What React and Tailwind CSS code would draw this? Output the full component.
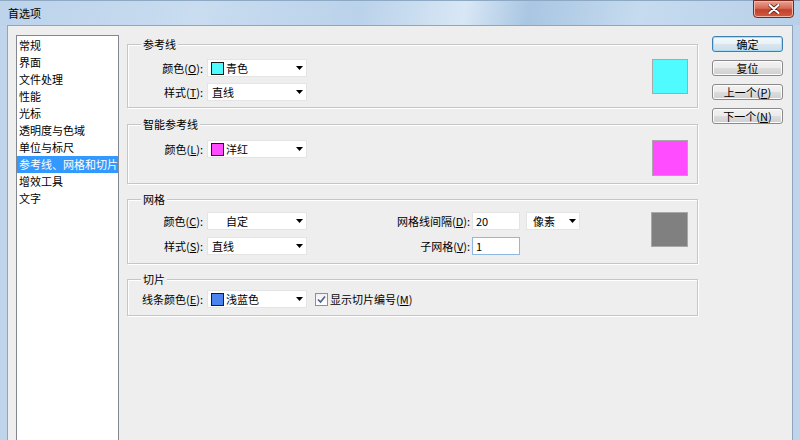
import React from "react";

const Arrow = () => (
  <svg width="7" height="4" viewBox="0 0 7 4" className="shrink-0">
    <polygon points="0,0 7,0 3.5,4" fill="#000" />
  </svg>
);

const Swatch = ({ color }) => (
  <span
    className="w-[13px] h-[13px] border border-[#1a1a1a] shrink-0"
    style={{ background: color || "transparent", borderColor: color ? "#1a1a1a" : "transparent" }}
  />
);

const Dropdown = ({ color, text, showSwatch = true, w = "w-[100px] ml-[2px]" }) => (
  <div className={`${w} h-[18px] bg-white border border-[#e4e4e4] flex items-center pl-[3px] pr-[3px] shrink-0`}>
    {showSwatch && <Swatch color={color} />}
    <span className={showSwatch ? "ml-[2px] flex-1" : "ml-[1px] flex-1"}>{text}</span>
    <Arrow />
  </div>
);

const Label = ({ children, w = "w-[77px]" }) => (
  <div className={`${w} text-right pr-[2px] shrink-0`}>{children}</div>
);

const Group = ({ title, className, children }) => (
  <div
    className={`border border-[#c6c6c6] shadow-[inset_1px_1px_0_#ffffff,1px_1px_0_#ffffff] flex flex-col ${className}`}
  >
    <div className="-mt-[9px] ml-[13px] px-[2px] bg-[#eeeeee] self-start leading-[16px]">{title}</div>
    {children}
  </div>
);

const BigSwatch = ({ color, className }) => (
  <div className={`border border-[#a8a8a8] ml-auto mr-[9px] shrink-0 ${className}`} style={{ background: color }} />
);

const Button = ({ children, primary }) => (
  <div
    className={`h-[16px] rounded-[3px] border flex items-center justify-center leading-none ${
      primary
        ? "border-[#3c7fb1] shadow-[inset_0_0_0_1px_#a6dcf5] bg-[linear-gradient(#f4f9fc,#e9f1f7_50%,#d9e6ef_50%,#cfdde8)]"
        : "border-[#8a8a8a] shadow-[inset_0_0_0_1px_#fcfcfc] bg-[linear-gradient(#f2f2f2,#ebebeb_50%,#dddddd_50%,#cfcfcf)]"
    }`}
  >
    {children}
  </div>
);

const items = ["常规", "界面", "文件处理", "性能", "光标", "透明度与色域", "单位与标尺", "参考线、网格和切片", "增效工具", "文字"];

export default function App() {
  return (
    <div className="w-[800px] h-[440px] overflow-hidden flex flex-col bg-[#bed5ec] text-[11px] text-black font-['Noto_Sans_CJK_SC',sans-serif]">
      {/* Title bar */}
      <div className="h-[25px] shrink-0 flex items-start bg-[linear-gradient(100deg,#bcd3ea_0%,#c9dcf0_25%,#bad2ea_45%,#d8e7f5_58%,#a9c6e2_66%,#c6dbef_80%,#b7cfe8_100%)] border-t border-[#8ea9c4]">
        <span className="ml-[8px] mt-[4px] leading-[16px]">首选项</span>
        <div className="ml-auto mr-[6px] w-[41px] h-[18px] -mt-px rounded-b-[4px] border border-[#7a2a1c] bg-[linear-gradient(#e8a393,#d66b56_45%,#c2412b_55%,#d05b3f)] flex items-center justify-center shadow-[inset_0_0_0_1px_#efb6a8]">
          <svg width="12" height="10" viewBox="0 0 12 10">
            <path d="M1.5 1 L10.5 9 M10.5 1 L1.5 9" stroke="#5a1a10" strokeWidth="3.6" strokeLinecap="round" />
            <path d="M1.5 1 L10.5 9 M10.5 1 L1.5 9" stroke="#ffffff" strokeWidth="2.2" strokeLinecap="round" />
          </svg>
        </div>
      </div>

      {/* Frame + body */}
      <div className="flex-1 flex px-[7px] min-h-0">
        <div className="flex-1 bg-[#eeeeee] border-l border-t border-r border-[#8fa6be] flex items-start min-h-0 overflow-hidden">
          {/* list */}
          <div className="ml-[8px] mt-[9px] w-[103px] h-[420px] shrink-0 bg-white border border-[#828790] pt-px">
            {items.map((t, i) => (
              <div
                key={t}
                className={`h-[17px] leading-[17px] pl-[2px] whitespace-nowrap ${
                  i === 7 ? "bg-[#3399ff] text-white" : ""
                }`}
              >
                {t}
              </div>
            ))}
          </div>

          {/* groups */}
          <div className="ml-[8px] mt-[18px] w-[571px] shrink-0 flex flex-col">
            <Group title="参考线" className="h-[64px]">
              <div className="flex mt-[7px]">
                <div className="flex flex-col gap-[6px]">
                  <div className="flex items-center">
                    <Label>颜色(<u>O</u>):</Label>
                    <Dropdown color="#4ffaff" text="青色" />
                  </div>
                  <div className="flex items-center">
                    <Label>样式(<u>T</u>):</Label>
                    <Dropdown text="直线" showSwatch={false} />
                  </div>
                </div>
                <BigSwatch color="#50fbff" className="w-[36px] h-[35px]" />
              </div>
            </Group>

            <Group title="智能参考线" className="h-[60px] mt-[16px]">
              <div className="flex mt-[8px]">
                <div className="flex items-center self-start">
                  <Label>颜色(<u>L</u>):</Label>
                  <Dropdown color="#ff4cff" text="洋红" />
                </div>
                <BigSwatch color="#ff4cff" className="w-[36px] h-[36px]" />
              </div>
            </Group>

            <Group title="网格" className="h-[65px] mt-[15px]">
              <div className="flex mt-[5px]">
                <div className="flex flex-col gap-[7px]">
                  <div className="flex items-center">
                    <Label>颜色(<u>C</u>):</Label>
                    <Dropdown color={null} text="自定" />
                    <Label w="w-[165px]">网格线间隔(<u>D</u>):</Label>
                    <div className="w-[48px] h-[18px] bg-white border border-[#e4e4e4] pl-[3px] leading-[16px]">20</div>
                    <Dropdown text="像素" showSwatch={false} w="w-[54px] ml-[6px] !pl-[5px]" />
                  </div>
                  <div className="flex items-center">
                    <Label>样式(<u>S</u>):</Label>
                    <Dropdown text="直线" showSwatch={false} />
                    <Label w="w-[165px]">子网格(<u>V</u>):</Label>
                    <div className="w-[48px] h-[18px] bg-white border border-[#8fb8e0] pl-[3px] leading-[16px]">1</div>
                  </div>
                </div>
                <BigSwatch color="#808080" className="w-[37px] h-[35px]" />
              </div>
            </Group>

            <Group title="切片" className="h-[37px] mt-[15px]">
              <div className="flex items-center mt-[3px]">
                <Label>线条颜色(<u>E</u>):</Label>
                <Dropdown color="#4a82ee" text="浅蓝色" />
                <div className="ml-[8px] w-[13px] h-[13px] border border-[#8f8f8f] bg-[linear-gradient(#f0f0f0,#ffffff)] flex items-center justify-center">
                  <svg width="9" height="9" viewBox="0 0 9 9">
                    <path d="M1 4.5 L3.5 7 L8 1.5" fill="none" stroke="#4a5f8a" strokeWidth="1.6" />
                  </svg>
                </div>
                <span className="ml-[2px]">显示切片编号(<u>M</u>)</span>
              </div>
            </Group>
          </div>

          {/* buttons */}
          <div className="ml-[14px] mt-[10px] w-[71px] shrink-0 flex flex-col gap-[8px]">
            <Button primary>确定</Button>
            <Button>复位</Button>
            <Button>上一个(<u>P</u>)</Button>
            <Button>下一个(<u>N</u>)</Button>
          </div>
        </div>
      </div>
    </div>
  );
}
